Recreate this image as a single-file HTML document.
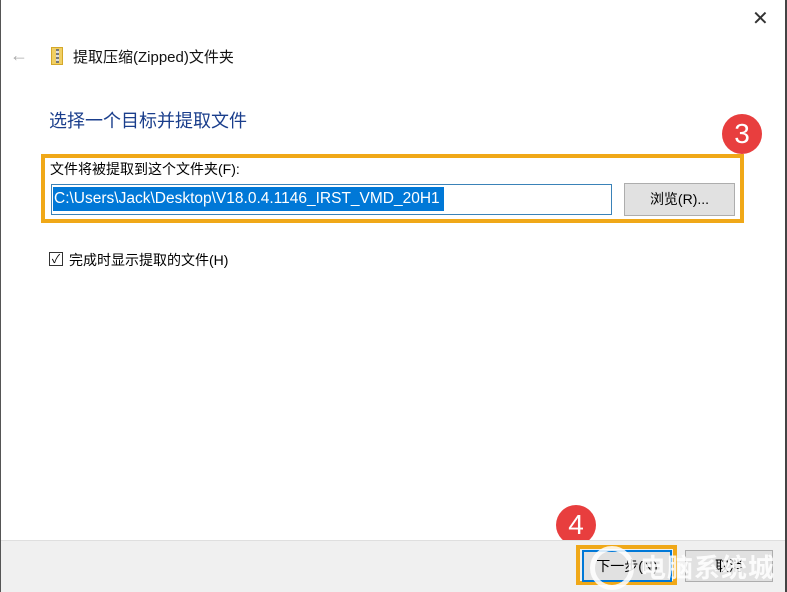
<!DOCTYPE html>
<html><head><meta charset="utf-8"><style>
*{margin:0;padding:0;box-sizing:border-box}
body{width:787px;height:592px;background:#fff;position:relative;overflow:hidden;font-family:"Liberation Sans","Noto Sans CJK SC",sans-serif;color:#000}
.a{position:absolute}
</style></head><body>
<div class="a" style="left:0;top:0;width:1px;height:592px;background:#555"></div>
<div class="a" style="right:0;top:0;width:2px;height:592px;background:#444"></div>
<div class="a" style="left:752px;top:6px;font-size:20px;color:#333">✕</div>
<div class="a" style="left:10px;top:45px;font-size:18px;color:#aaa">←</div>
<div class="a" style="left:51px;top:47px;width:12px;height:18px;background:#f1cf63;border:1px solid #d4a82a"><div style="margin:1px auto;width:3px;height:14px;background:repeating-linear-gradient(#777 0 2px,#ddd 2px 4px)"></div></div>
<div class="a" style="left:73px;top:46px;font-size:15px;color:#111">提取压缩(Zipped)文件夹</div>
<div class="a" style="left:49px;top:107px;font-size:18px;color:#1a3e8c">选择一个目标并提取文件</div>
<div class="a" style="left:41px;top:154px;width:703px;height:69px;border:4px solid #f0a818"></div>
<div class="a" style="left:50px;top:159px;font-size:14px">文件将被提取到这个文件夹(F):</div>
<div class="a" style="left:51px;top:184px;width:561px;height:31px;border:1px solid #3a82b8"></div>
<div class="a" style="left:53px;top:187px;width:391px;height:24px;background:#0078d7;color:#fff;font-size:15.5px;line-height:24px;padding-left:1px;white-space:nowrap;overflow:hidden">C:\Users\Jack\Desktop\V18.0.4.1146_IRST_VMD_20H1</div>
<div class="a" style="left:624px;top:183px;width:111px;height:33px;background:#e1e1e1;border:1px solid #adadad;font-size:14px;text-align:center;line-height:31px">浏览(R)...</div>
<div class="a" style="left:49px;top:252px;width:14px;height:14px;border:1px solid #333;font-size:12px;line-height:12px;text-align:center">✓</div>
<div class="a" style="left:69px;top:250px;font-size:14px">完成时显示提取的文件(H)</div>
<div class="a" style="left:722px;top:114px;width:40px;height:40px;border-radius:50%;background:#e83e3e;color:#fff;font-size:28px;text-align:center;line-height:40px">3</div>
<div class="a" style="left:556px;top:505px;width:40px;height:40px;border-radius:50%;background:#e83e3e;color:#fff;font-size:28px;text-align:center;line-height:40px">4</div>
<div class="a" style="left:1px;top:540px;width:784px;height:52px;background:#f0f0f0;border-top:1px solid #dfdfdf"></div>
<div class="a" style="left:576px;top:545px;width:101px;height:40px;border:4px solid #f0a818"></div>
<div class="a" style="left:582px;top:550px;width:90px;height:32px;background:#e1e1e1;border:2px solid #0078d7;font-size:14px;text-align:center;line-height:28px">下一步(N)</div>
<div class="a" style="left:685px;top:550px;width:88px;height:32px;background:#e1e1e1;border:1px solid #adadad;font-size:14px;text-align:center;line-height:30px">取消</div>
<div class="a" style="left:590px;top:546px;width:44px;height:44px;border:5px solid rgba(255,255,255,.85);border-radius:50%"></div>
<div class="a" style="left:640px;top:548px;font-size:26px;font-weight:bold;color:rgba(255,255,255,.85);letter-spacing:1px">电脑系统城</div>
</body></html>
